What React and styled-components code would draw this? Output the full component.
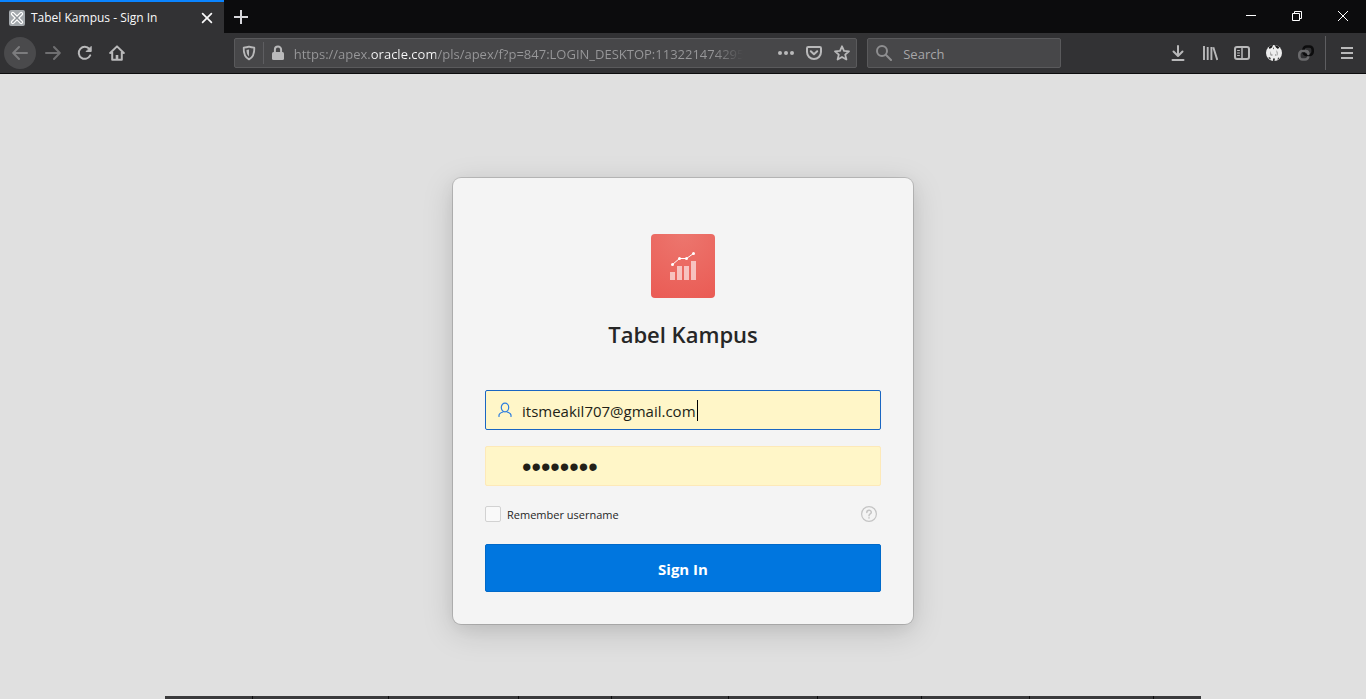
import React from "react";
import styled, { createGlobalStyle } from "styled-components";

const GlobalStyle = createGlobalStyle`
  *, *::before, *::after { box-sizing: border-box; }
  html, body { margin: 0; }
  body {
    background: #e0e0e0;
    color: #262626;
    font-family: "Open Sans", "Noto Sans", sans-serif;
    font-size: 12px;
  }
  button, input { font: inherit; }
`;

const Window = styled.div`
  display: flex;
  flex-direction: column;
  min-height: 100vh;
`;

const TabBar = styled.header`
  display: flex;
  height: 33px;
  background: #0c0c0d;
`;

const Tab = styled.div`
  display: flex;
  align-items: center;
  gap: 6px;
  width: 224px;
  padding: 0 8px 0 9px;
  background: #323234;
  border-top: 2px solid #0a84ff;
  color: #f9f9fa;
`;

const TabTitle = styled.span`
  flex: 1;
  white-space: nowrap;
`;

const IconButton = styled.button`
  display: flex;
  align-items: center;
  justify-content: center;
  flex: none;
  width: ${(p) => p.$size || 32}px;
  height: ${(p) => p.$size || 32}px;
  margin-right: ${(p) => (p.$round ? 1 : 0)}px;
  padding: 0;
  border: 0;
  border-radius: ${(p) => (p.$round ? "50%" : "2px")};
  background: ${(p) => (p.$round ? "#4a4a4c" : "transparent")};
  color: ${(p) => p.$tone || "#b9b9ba"};
`;

const WindowControls = styled.div`
  display: flex;
  margin-left: auto;
`;

const WindowButton = styled.button`
  display: flex;
  align-items: center;
  justify-content: center;
  width: 46px;
  height: 32px;
  padding: 0;
  border: 0;
  background: transparent;
  color: #fff;
`;

const NavBar = styled.nav`
  display: flex;
  align-items: center;
  height: 41px;
  padding: 0 3px 0 4px;
  background: #323234;
  border-bottom: 1px solid #0c0c0d;
`;

const Group = styled.div`
  display: flex;
  align-items: center;
`;

const Spacer = styled.div`
  flex: 101 1 0;
`;

const Box = styled.div`
  display: flex;
  align-items: center;
  height: 30px;
  background: #474749;
  border: 1px solid #5a5a5c;
  border-radius: 2px;
  color: #b9b9ba;
`;

const AddressBox = styled(Box)`
  flex: 623 1 0;
  min-width: 0;
  margin-right: 10px;
`;

const SearchBox = styled(Box)`
  width: 194px;
  gap: 11px;
  padding-left: 8px;
  color: #8e8e90;
`;

const Divider = styled.span`
  width: 1px;
  height: ${(p) => p.$height}px;
  margin: ${(p) => p.$margin};
  background: #5e5e61;
`;

const BareInput = styled.input`
  flex: 1;
  min-width: 0;
  padding: 2px 0 0;
  border: 0;
  outline: 0;
  background: transparent;
  color: #b1b1b3;
  font-size: 13px;
  &::placeholder { color: #a6a6a8; opacity: 1; }
`;

const AddressInput = styled(BareInput)`
  height: 24px;
  margin: 0 28px 0 2px;
  background: linear-gradient(90deg, #98989a 76px, #f9f9fa 76px 142px, #98989a 142px 419px, transparent 449px);
  -webkit-background-clip: text;
  background-clip: text;
  -webkit-text-fill-color: transparent;
`;

const Page = styled.main`
  flex: 1;
  padding: 104px 16px 72px;
`;

const Card = styled.form`
  display: flex;
  flex-direction: column;
  max-width: 460px;
  margin: 0 auto;
  padding: 56px 32px 32px;
  background: #f4f4f4;
  border-radius: 8px;
  box-shadow: 0 0 0 1px rgba(0, 0, 0, 0.15), 0 8px 32px rgba(0, 0, 0, 0.15), 0 4px 16px rgba(0, 0, 0, 0.05);
`;

const AppLogo = styled.div`
  display: flex;
  align-items: center;
  justify-content: center;
  align-self: center;
  width: 64px;
  height: 64px;
  border-radius: 4px;
  background: radial-gradient(circle at 50% 0, #ec766e, #ea5b54 100%);
`;

const Title = styled.h1`
  margin: 20px 0 40px;
  font-size: 22px;
  line-height: 32px;
  font-weight: 600;
  text-align: center;
`;

const Field = styled.label`
  position: relative;
  display: flex;
  align-items: center;
  gap: 9px;
  height: 40px;
  margin-bottom: 16px;
  padding: 0 11px;
  background: #fff6c8;
  border: 1px solid ${(p) => (p.$focused ? "#1a66c2" : "#fde9b8")};
  border-radius: 2px;
  color: #2b7de0;
`;

const IconSlot = styled.span`
  display: flex;
  width: 16px;
  height: 16px;
`;

const FieldInput = styled(BareInput)`
  height: 38px;
  color: #221f17;
  font-size: 15px;
`;

const PasswordInput = styled(FieldInput)`
  font-family: "Liberation Sans", sans-serif;
  font-size: 27px;
`;

const Caret = styled.span`
  position: absolute;
  top: 9px;
  left: 211px;
  width: 1px;
  height: 21px;
  background: #000;
`;

const Options = styled.div`
  display: flex;
  align-items: center;
  justify-content: space-between;
  height: 24px;
  margin-bottom: 18px;
`;

const Remember = styled.label`
  display: flex;
  align-items: center;
  gap: 6px;
  font-size: 11px;
`;

const Checkbox = styled.input`
  appearance: none;
  width: 16px;
  height: 16px;
  margin: 0;
  background: #f9f9f9;
  border: 1px solid #d2d2d2;
  border-radius: 2px;
`;

const SignIn = styled.button`
  height: 48px;
  padding: 2px 0 0;
  border: 1px solid #0069c9;
  border-radius: 2px;
  background: #0076df;
  color: #fff;
  font-size: 15px;
  font-weight: 700;
`;

const Strip = styled.footer`
  display: grid;
  grid-template-columns: 87fr 135fr 129fr 92fr 116fr 88fr 103fr 107fr 123fr 47fr;
  gap: 1px;
  height: 3px;
  margin: 0 165px;
  background: #0c0c0d;
`;

const StripItem = styled.span`
  background: #3a3a3c;
`;

const Svg = ({ size = 16, width = 2, children, ...rest }) => (
  <svg width={size} height={size} viewBox={`0 0 ${size} ${size}`} fill="none" stroke="currentColor"
    strokeWidth={width} strokeLinecap="round" strokeLinejoin="round" aria-hidden="true" {...rest}>
    {children}
  </svg>
);

export default function App() {
  return (
    <>
      <GlobalStyle />
      <Window>
        <TabBar>
          <Tab>
            <Svg strokeLinecap="butt">
              <rect width="16" height="16" rx="2" fill="#a4a9ad" stroke="none" />
              <path d="M3.800 3.800 12.200 12.200M3.800 12.200 12.200 3.800" stroke="#fff" strokeWidth="4" strokeLinecap="round" />
              <path d="M3.800 3.800 12.200 12.200M3.800 12.200 12.200 3.800" stroke="#8f959a" strokeWidth="1.400" strokeLinecap="round" />
            </Svg>
            <TabTitle>Tabel Kampus - Sign In</TabTitle>
            <IconButton $size={18} $tone="#f9f9fa" aria-label="Close tab">
              <Svg width={1.7}><path d="m3.6 3.6 8.8 8.8m0-8.8-8.8 8.8" /></Svg>
            </IconButton>
          </Tab>
          <IconButton $size={33} $tone="#d7d7db" aria-label="New tab">
            <Svg width={2} strokeLinecap="butt"><path d="M8 1v14M1 8h14" /></Svg>
          </IconButton>
          <WindowControls>
            <WindowButton aria-label="Minimize">
              <Svg size={10} width={1} strokeLinecap="butt"><path d="M0 4.5h10" /></Svg>
            </WindowButton>
            <WindowButton aria-label="Restore">
              <Svg size={10} width={1} strokeLinejoin="miter" strokeLinecap="butt">
                <path d="M.5 2.5h7v7h-7zM2.5 2.5v-2h7v7h-2" />
              </Svg>
            </WindowButton>
            <WindowButton aria-label="Close">
              <Svg size={10} width={1} strokeLinecap="butt"><path d="m0 0 10 10M10 0 0 10" /></Svg>
            </WindowButton>
          </WindowControls>
        </TabBar>

        <NavBar>
          <Group>
            <IconButton $round $tone="#7c7c7e" aria-label="Back">
              <Svg><path d="M15 8H1.5M7 2 1.2 8 7 14" /></Svg>
            </IconButton>
            <IconButton $tone="#6f6f71" aria-label="Forward">
              <Svg><path d="M1 8h13.5M9 2l5.8 6L9 14" /></Svg>
            </IconButton>
            <IconButton aria-label="Reload">
              <Svg><path d="M13.2 10.4A6 6 0 1 1 12.4 4" /><path d="M14.2 1.8v4.7H9.5z" fill="currentColor" strokeWidth="1" /></Svg>
            </IconButton>
            <IconButton aria-label="Home">
              <Svg><path d="M1.2 8 8 1.4 14.8 8M3.2 7v7.8h9.6V7" /><path d="M8 14.5V10" strokeWidth="2.6" strokeLinecap="butt" /></Svg>
            </IconButton>
          </Group>
          <Spacer />
          <AddressBox>
            <IconButton $size={28} aria-label="Tracking protection">
              <Svg>
                <path d="M8 1.6c2 .7 3.5.9 5.3 1.1C13.5 8 12.5 12 8 14.4 3.5 12 2.5 8 2.700 2.700 4.500 2.500 6 2.300 8 1.600z" strokeWidth="1.8" />
                <path d="M8 4.500v7C6.200 10 5.500 8 5.500 5z" fill="currentColor" stroke="none" />
              </Svg>
            </IconButton>
            <Divider $height={22} $margin="0" />
            <IconButton $size={28} aria-label="Connection secure">
              <Svg><path d="M4.900 7V4.600a3.100 3.100 0 0 1 6.200 0V7" /><rect x="2" y="7" width="12" height="8" rx="1.500" fill="currentColor" stroke="none" /></Svg>
            </IconButton>
            <AddressInput aria-label="Address" defaultValue="https://apex.oracle.com/pls/apex/f?p=847:LOGIN_DESKTOP:113221474295" />
            <IconButton $size={28} aria-label="Page actions">
              <Svg fill="currentColor" stroke="none"><circle cx="2" cy="8" r="2" /><circle cx="8" cy="8" r="2" /><circle cx="14" cy="8" r="2" /></Svg>
            </IconButton>
            <IconButton $size={28} aria-label="Save to Pocket">
              <Svg><path d="M2.200 2h11.600q1.200 0 1.200 1.200V7a7 7 0 0 1-14 0V3.200Q1 2 2.200 2z" /><path d="m4.800 6.300 3.200 3 3.200-3" /></Svg>
            </IconButton>
            <IconButton $size={28} aria-label="Bookmark">
              <Svg width={1.8}><path d="m8 1.300 2 4.600 5 .4-3.800 3.300 1.200 4.900L8 11.900l-4.400 2.600 1.200-4.900L1 6.300l5-.4z" /></Svg>
            </IconButton>
          </AddressBox>
          <SearchBox>
            <Svg><circle cx="6" cy="6" r="5" /><path d="m9.800 9.800 5.200 5.200" /></Svg>
            <BareInput type="search" aria-label="Search" placeholder="Search" />
          </SearchBox>
          <Spacer />
          <Group>
            <IconButton aria-label="Downloads">
              <Svg><path d="M8 1v9.500M3.500 6.500 8 11l4.500-4.500M2.500 15h11" /></Svg>
            </IconButton>
            <IconButton aria-label="Library">
              <Svg strokeLinecap="butt"><path d="M2 1v14M5.700 2v13M9.400 2v13M11.300 2.300l4 12.700" strokeWidth="1.900" /></Svg>
            </IconButton>
            <IconButton aria-label="Sidebars">
              <Svg><rect x="1" y="2" width="14" height="12" rx="2" /><path d="M8 2v12" strokeWidth="1.500" /><path d="M3.500 5.500h2M3.500 8h2M3.500 10.500h2" strokeWidth="1" /></Svg>
            </IconButton>
            <IconButton aria-label="Account">
              <Svg stroke="none">
                <circle cx="8" cy="8" r="8" fill="#ededed" />
                <path d="M2.800 2Q5 .2 7 .1L6 2.500 3.500 4zM8.500 0Q11.500.3 13.300 2.200L12 4 10 2.500zM7 2.500l1 .5-1 1.500z" fill="#1a1a1a" />
                <path d="M4 6l1.500 3L4 11zM10 5l.8 4 1.200 2-.2-4z" fill="#aaa" />
                <path d="M5 9.500h1.500v1H5zM9 9.500h1.500v1H9z" fill="#777" />
                <path d="M2 13l2-1 1 2.500zM7 13.500h2L8.500 16H7zM12 12.500l1.500.5-2 2z" fill="#333" />
              </Svg>
            </IconButton>
            <IconButton aria-label="Link extension">
              <Svg width={2.600}>
                <rect x="1.300" y="6" width="9" height="8.500" rx="3.200" stroke="#6a6a6c" />
                <rect x="5.500" y="1.500" width="9.200" height="8.500" rx="3.200" stroke="#0c0c0d" />
                <path d="M5 6h2.500q2.800 0 2.800 3" stroke="#6a6a6c" />
              </Svg>
            </IconButton>
            <Divider $height={34} $margin="0 5px 0 3px" />
            <IconButton aria-label="Menu">
              <Svg strokeLinecap="butt"><path d="M2 3h12M2 8h12M2 13h12" /></Svg>
            </IconButton>
          </Group>
        </NavBar>

        <Page>
          <Card onSubmit={(e) => e.preventDefault()}>
            <AppLogo>
              <Svg size={32} stroke="none">
                <path d="M3 22h5v8H3zM10 16h5v14h-5zM17 16h5v14h-5zM24 11h5v19h-5z" fill="#fff" fillOpacity=".6" />
                <path d="m5.500 14.500 7-6h7l7-5" stroke="#fff" strokeWidth="1" />
                <path d="M5.500 14.500h0M12.500 8.500h0M19.500 8.500h0M26.500 3.500h0" stroke="#fff" strokeWidth="3" />
              </Svg>
            </AppLogo>
            <Title>Tabel Kampus</Title>
            <Field $focused>
              <IconSlot>
                <Svg width={1.200}><ellipse cx="8" cy="5.500" rx="3.700" ry="4.300" /><path d="M2 14.500v-1.200c0-1.800 1.500-2.500 4-3.300M14 14.500v-1.200c0-1.800-1.500-2.500-4-3.300" /></Svg>
              </IconSlot>
              <FieldInput type="text" aria-label="Username" defaultValue="itsmeakil707@gmail.com" />
              <Caret />
            </Field>
            <Field>
              <IconSlot />
              <PasswordInput type="password" aria-label="Password" defaultValue="password" />
            </Field>
            <Options>
              <Remember><Checkbox type="checkbox" />Remember username</Remember>
              <IconButton type="button" $size={24} $tone="#c4c4c4" aria-label="Help">
                <Svg width={1.200}>
                  <circle cx="8" cy="8" r="7.400" />
                  <path d="M5.800 6.500C5.800 3.500 10.300 3.600 10.300 6.300 10.300 8 8 7.900 8 9.700M8 11.700v.2" strokeWidth="1.500" />
                </Svg>
              </IconButton>
            </Options>
            <SignIn type="submit">Sign In</SignIn>
          </Card>
        </Page>

        <Strip>
          {Array.from({ length: 10 }, (_, i) => <StripItem key={i} />)}
        </Strip>
      </Window>
    </>
  );
}
